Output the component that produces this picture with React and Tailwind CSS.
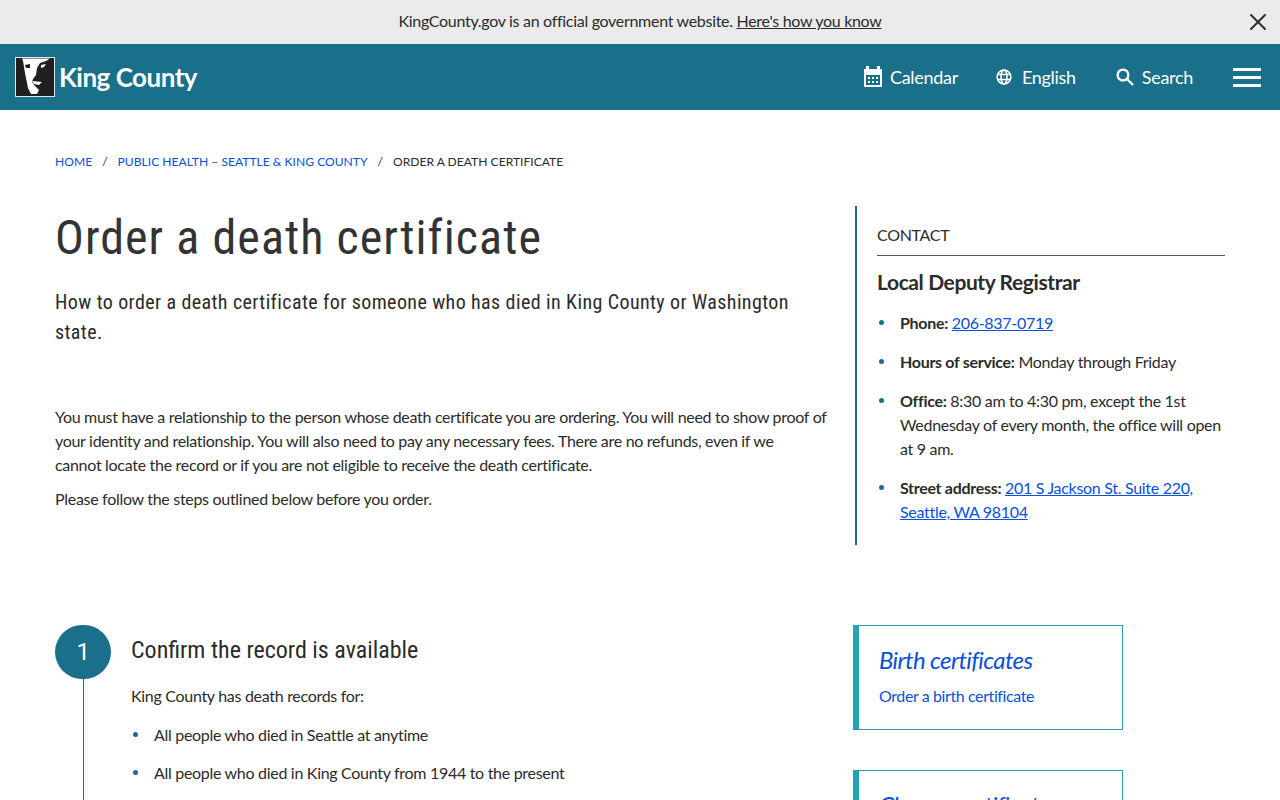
import React from 'react';
import { X } from 'lucide-react';

// King County portrait mark
function Logo() {
  return (
    <svg width="40" height="40" viewBox="0 0 40 40" className="shrink-0">
      <rect x="0.5" y="0.5" width="39" height="39" fill="#231f20" stroke="#d8eef2" />
      <path d="M7 1.5 H35 L31 4 L25 6 L22 11 L21 18 L18 22 L17 25 L20 29 L24 33 L22 37 H16 L13 31 L10 16 L8 4 Z" fill="#fff" />
      <path d="M10 8 L15 7 L15 11 L11 11 Z" fill="#231f20" />
      <path d="M17 24 L27 25 L24 28 L19 27 Z" fill="#fff" />
      <path d="M26 8 L31 7 L29 10 L26 11 Z" fill="#fff" />
    </svg>
  );
}

function CalendarIcon() {
  return (
    <svg width="20" height="22" viewBox="0 0 20 22" fill="#fff">
      <rect x="3" y="0" width="3" height="5" />
      <rect x="14" y="0" width="3" height="5" />
      <path fillRule="evenodd" d="M1 3 H19 V21 H1 Z M3 9 V19 H17 V9 Z" />
      <path d="M5 11h2v2H5zM9 11h2v2H9zM13 11h2v2h-2zM5 15h2v2H5zM9 15h2v2H9zM13 15h2v2h-2z" />
    </svg>
  );
}

function GlobeIcon() {
  return (
    <svg width="16" height="16" viewBox="0 0 16 16" fill="none" stroke="#fff" strokeWidth="1.5">
      <circle cx="8" cy="8" r="6.9" />
      <ellipse cx="8" cy="8" rx="3" ry="6.9" />
      <path d="M1 5.6H15M1 10.4H15" />
    </svg>
  );
}

function SearchIcon() {
  return (
    <svg width="18" height="18" viewBox="0 0 18 18" fill="none" stroke="#fff" strokeWidth="2.3">
      <circle cx="7" cy="7" r="5.4" />
      <path d="M11 11 L17 17" />
    </svg>
  );
}

function Bullet({ children }) {
  return (
    <li className="relative pl-[23px]">
      <span className="absolute left-[2px] top-[9px] h-[5px] w-[5px] rounded-full bg-[#1a6f8a]" />
      {children}
    </li>
  );
}

function LinkCard({ title, sub }) {
  return (
    <div className="h-[105px] w-[270px] shrink-0 border border-l-[6px] border-[#2f9ea6] border-l-[#22a5b3] px-5 pt-[17px] text-[#0a50dc]">
      <div className="-mt-px text-[24px] italic leading-[36px] tracking-[-0.63px]">{title}</div>
      <div className="mt-[6px] leading-6 tracking-[-0.4px]">{sub}</div>
    </div>
  );
}

const condensed = "font-['Roboto',sans-serif] [font-stretch:75%]";

export default function App() {
  return (
    <div className="h-[800px] overflow-hidden bg-white font-['Lato',sans-serif] text-[16px] leading-6 tracking-[-0.3px] text-[#2b2b2b]">
      <div className="relative flex h-[44px] items-center justify-center bg-[#ebebeb]">
        <span className="-translate-y-px">KingCounty.gov is an official government website. <a className="underline">Here's how you know</a></span>
        <X className="absolute right-[8px] top-[8px] text-[#333]" size={28} strokeWidth={1.8} />
      </div>

      <header className="flex h-[66px] items-center justify-between bg-[#1a6f8a] pl-[15px] pr-[19px] text-white">
        <div className="flex items-center gap-[4px]">
          <Logo />
          <span className="text-[26px] font-bold tracking-[-0.5px]">King County</span>
        </div>
        <nav className="flex items-center text-[18px]">
          <span className="flex items-center gap-[7px]"><CalendarIcon />Calendar</span>
          <span className="ml-[38px] flex items-center gap-[10px]"><GlobeIcon />English</span>
          <span className="ml-[40px] flex items-center gap-[8px]"><SearchIcon />Search</span>
          <span className="ml-[40px] flex w-[28px] flex-col gap-[5px]">
            <span className="h-[3px] bg-white" /><span className="h-[3px] bg-white" /><span className="h-[3px] bg-white" />
          </span>
        </nav>
      </header>

      <main className="px-[55px]">
        <div className="flex pt-[40px] text-[12.1px] leading-6 tracking-normal">
          <a className="text-[#0a50dc]">HOME</a>
          <span className="mx-[10px]">/</span>
          <a className="text-[#0a50dc]">PUBLIC HEALTH – SEATTLE &amp; KING COUNTY</a>
          <span className="mx-[10px]">/</span>
          <span>ORDER A DEATH CERTIFICATE</span>
        </div>

        <div className="mt-[32px] flex">
          <section className="w-[776px]">
            <h1 className={`${condensed} mt-[2px] text-[48px] leading-[60px] tracking-[1.06px] text-[#333]`}>Order a death certificate</h1>
            <p className={`${condensed} mt-[19px] w-[770px] text-[20px] leading-[30px] tracking-[0.4px]`}>How to order a death certificate for someone who has died in King County or Washington state.</p>
            <p className="mt-[58px]">You must have a relationship to the person whose death certificate you are ordering. You will need to show proof of your identity and relationship. You will also need to pay any necessary fees. There are no refunds, even if we<br />cannot locate the record or if you are not eligible to receive the death certificate.</p>
            <p className="mt-[10px]">Please follow the steps outlined below before you order.</p>
          </section>

          <aside className="ml-[24px] h-[339px] w-[370px] border-l-2 border-[#1a6f8a] pl-5">
            <div className="border-b border-[#555] pb-[8px] pt-[17px]">CONTACT</div>
            <h2 className="mt-[10px] text-[21px] font-bold leading-8 tracking-[-0.4px]">Local Deputy Registrar</h2>
            <ul className="mt-[13px] flex flex-col gap-[15px]">
              <Bullet><b>Phone:</b> <a className="text-[#0a50dc] underline">206-837-0719</a></Bullet>
              <Bullet><b>Hours of service:</b> Monday through Friday</Bullet>
              <Bullet><b>Office:</b> 8:30 am to 4:30 pm, except the 1st Wednesday of every month, the office will open at 9 am.</Bullet>
              <Bullet><b>Street address:</b> <a className="text-[#0a50dc] underline">201 S Jackson St. Suite 220, Seattle, WA 98104</a></Bullet>
            </ul>
          </aside>
        </div>

        <div className="mt-[80px] flex">
          <div className="flex w-[56px] shrink-0 flex-col items-center">
            <div className="flex h-[54px] w-[56px] items-center justify-center rounded-full bg-[#1a6f8a] font-['Roboto',sans-serif] text-[24px] text-white">1</div>
            <div className="h-[200px] w-px bg-[#1a6f8a]" />
          </div>
          <section className="ml-[20px] w-[722px]">
            <h2 className={`${condensed} mt-[7px] text-[24px] leading-9 tracking-normal`}>Confirm the record is available</h2>
            <p className="mt-[16px]">King County has death records for:</p>
            <ul className="mt-[15px] flex flex-col gap-[14px]">
              <Bullet>All people who died in Seattle at anytime</Bullet>
              <Bullet>All people who died in King County from 1944 to the present</Bullet>
            </ul>
          </section>
          <div className="flex flex-col gap-[40px]">
            <LinkCard title="Birth certificates" sub="Order a birth certificate" />
            <LinkCard title="Change certificates" sub="Change a certificate" />
          </div>
        </div>
      </main>
    </div>
  );
}
